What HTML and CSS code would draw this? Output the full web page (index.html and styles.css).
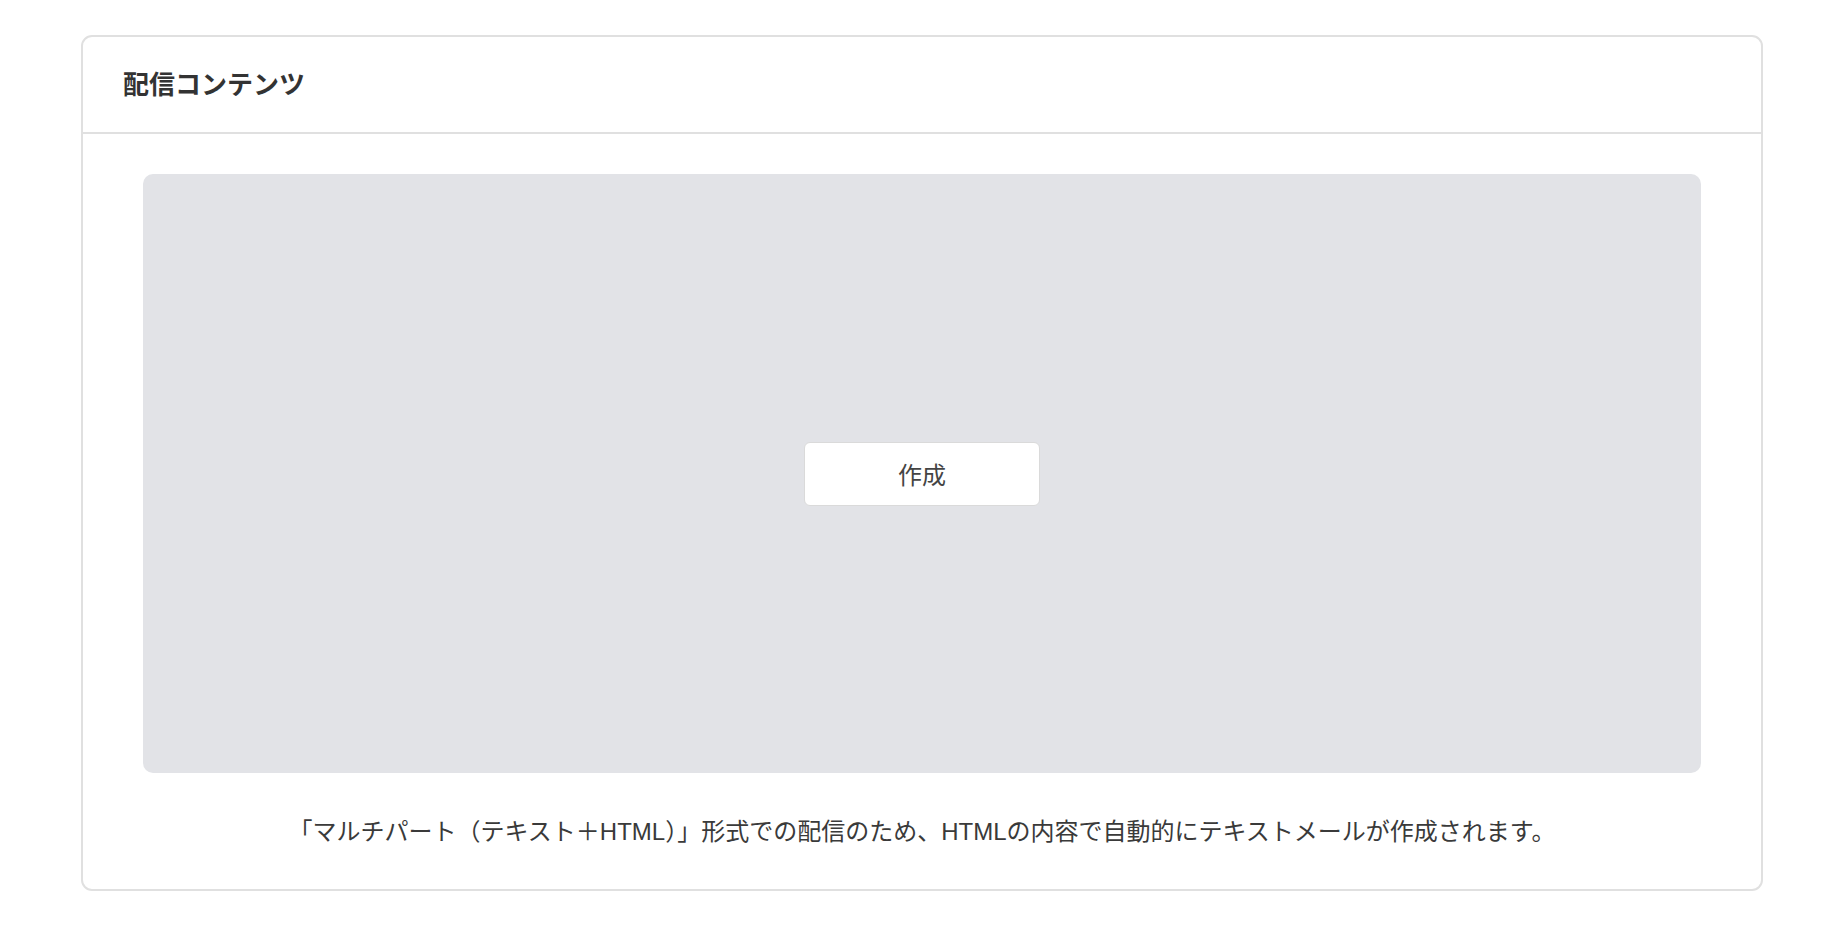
FILE: index.html
```html
<!DOCTYPE html>
<html lang="ja">
<head>
<meta charset="utf-8">
<title>配信コンテンツ</title>
<link rel="stylesheet" href="styles.css">
</head>
<body>
<section class="card">
  <header class="card-header">
    <h2 class="card-title">配信コンテンツ</h2>
  </header>
  <div class="card-body">
    <div class="editor-area">
      <button class="create-btn" type="button">作成</button>
    </div>
    <p class="note">「マルチパート（テキスト＋HTML）」形式での配信のため、HTMLの内容で自動的にテキストメールが作成されます。</p>
  </div>
</section>
</body>
</html>
```
FILE: styles.css
```css
html, body {
  margin: 0;
  padding: 0;
  background: #ffffff;
}
body {
  font-family: "Liberation Sans", "Noto Sans CJK JP", sans-serif;
  color: #333333;
  padding: 35px 0 0 81px;
}
.card {
  box-sizing: border-box;
  width: 1682px;
  border: 2px solid #e0e0e0;
  border-radius: 11px;
  background: #ffffff;
}
.card-header {
  box-sizing: border-box;
  height: 97px;
  display: flex;
  align-items: center;
  padding-left: 40px;
  border-bottom: 2px solid #e0e0e0;
}
.card-title {
  margin: 0;
  font-size: 26px;
  font-weight: 700;
  color: #333333;
  line-height: 1;
}
.card-body {
  padding: 40px 60px 39px;
}
.editor-area {
  height: 599px;
  background: #e2e3e7;
  border-radius: 10px;
  display: flex;
  align-items: center;
  justify-content: center;
}
.create-btn {
  width: 236px;
  height: 64px;
  background: #ffffff;
  border: 1.5px solid #dadada;
  border-radius: 6px;
  font-family: "Liberation Sans", "Noto Sans CJK JP", sans-serif;
  font-size: 24px;
  color: #444444;
  cursor: pointer;
}
.note {
  margin: 41px 0 0;
  text-align: center;
  font-size: 24px;
  line-height: 36px;
  color: #3a3a3a;
}
```
